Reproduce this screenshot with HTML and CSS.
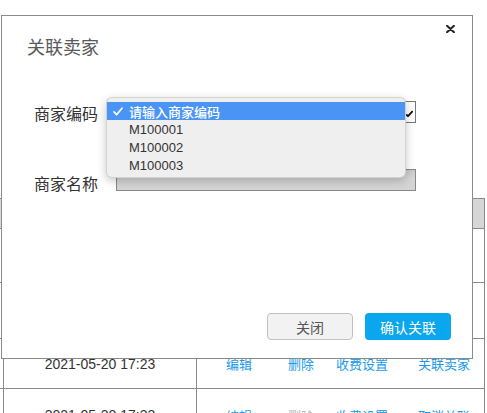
FILE: index.html
```html
<!DOCTYPE html>
<html lang="zh-CN">
<head>
<meta charset="utf-8">
<title>关联卖家</title>
<link rel="stylesheet" href="styles.css">
</head>
<body>
<div class="page">
  <div class="table">
    <div class="row thead">
      <div class="c0"></div><div class="c1"></div><div class="c2"></div>
    </div>
    <div class="row r1">
      <div class="c0"></div><div class="c1"></div><div class="c2"></div>
    </div>
    <div class="row r2">
      <div class="c0"></div><div class="c1"></div><div class="c2"></div>
    </div>
    <div class="row r3">
      <div class="c0"></div>
      <div class="c1 date">2021-05-20 17:23</div>
      <div class="c2 actions">
        <span class="link">编辑</span>
        <span class="link">删除</span>
        <span class="link">收费设置</span>
        <span class="link">关联卖家</span>
      </div>
    </div>
    <div class="row r4">
      <div class="c0"></div>
      <div class="c1 date">2021-05-20 17:23</div>
      <div class="c2 actions">
        <span class="link">编辑</span>
        <span class="link disabled">删除</span>
        <span class="link">收费设置</span>
        <span class="link">取消关联</span>
      </div>
    </div>
  </div>

  <div class="dialog">
    <svg class="close" width="9" height="8" viewBox="0 0 9 8"><path d="M1 0.8 L8 7.2 M8 0.8 L1 7.2" stroke="#222" stroke-width="2" stroke-linecap="round"/></svg>
    <div class="title">关联卖家</div>
    <div class="form">
      <div class="frow first">
        <div class="label">商家编码</div>
        <div class="select-wrap">
          <div class="select">
            <svg class="arrow" width="7" height="7" viewBox="0 0 7 7"><path d="M0.8 5 L2 6.2 L6.2 1.6" stroke="#111" stroke-width="1.8" fill="none" stroke-linecap="round"/></svg>
          </div>
          <div class="popup">
            <div class="opt active"><span class="chk"><svg width="10" height="9" viewBox="0 0 10 9"><path d="M1 4.8 L3.6 7.6 L9 1.2" stroke="#fff" stroke-width="1.7" fill="none" stroke-linecap="round" stroke-linejoin="round"/></svg></span><span class="txt">请输入商家编码</span></div>
            <div class="opt"><span class="chk"></span><span class="txt">M100001</span></div>
            <div class="opt"><span class="chk"></span><span class="txt">M100002</span></div>
            <div class="opt"><span class="chk"></span><span class="txt">M100003</span></div>
          </div>
        </div>
      </div>
      <div class="frow second">
        <div class="label low">商家名称</div>
        <div class="input"></div>
      </div>
    </div>
    <div class="footer">
      <div class="btn plain">关闭</div>
      <div class="btn primary">确认关联</div>
    </div>
  </div>
</div>
</body>
</html>
```

FILE: styles.css
```css
html, body {
  margin: 0;
  padding: 0;
  background: #fff;
}
body {
  width: 487px;
  height: 413px;
  overflow: hidden;
  font-family: "Liberation Sans", "Noto Sans CJK SC", sans-serif;
  color: #333;
}
.page {
  position: relative;
  padding-top: 198px;
}
.table {
  width: 484px;
  border-top: 1px solid #8a8a8a;
  border-right: 1px solid #8a8a8a;
}
.row {
  display: flex;
  border-bottom: 1px solid #8a8a8a;
}
.thead { height: 29px; background: #d6d6d6; }
.r1 { height: 53px; }
.r2 { height: 55px; }
.r3 { height: 49px; }
.r4 { height: 49px; }
.c0 { width: 3px; }
.c1 {
  width: 192px;
  border-left: 1px solid #8a8a8a;
}
.c2 {
  flex: 1;
  border-left: 1px solid #8a8a8a;
}
.thead .c1, .thead .c2 { border-left: none; }
.date {
  display: flex;
  align-items: center;
  justify-content: center;
  font-size: 14px;
  color: #333;
}
.r4 .date { padding-top: 3px; }
.actions {
  display: grid;
  grid-template-columns: 62px 48px 82px auto;
  align-items: center;
  padding-left: 29px;
  font-size: 13px;
  font-family: "Noto Sans CJK SC", sans-serif;
}
.r4 .actions { padding-top: 3px; }
.link { color: #1a9be8; white-space: nowrap; }
.link.disabled { color: #b8b8b8; }

.dialog {
  position: absolute;
  left: 1px;
  top: 15px;
  width: 470px;
  height: 342px;
  border: 1px solid #8a8a8a;
  background: #fff;
  display: flex;
  flex-direction: column;
}
.close {
  position: absolute;
  left: 444px;
  top: 9px;
}
.title {
  padding: 18px 0 0 25px;
  font-size: 18px;
  line-height: 24px;
  color: #5a5a5a;
  font-family: "Noto Sans CJK SC", sans-serif;
}
.form {
  padding-left: 32px;
}
.frow {
  display: flex;
  align-items: flex-start;
  height: 22px;
}
.frow.first { margin-top: 43px; }
.frow.second { margin-top: 46px; }
.label {
  width: 83px;
  font-size: 16px;
  line-height: 22px;
  margin-top: 1px;
  color: #333;
  font-family: "Noto Sans CJK SC", sans-serif;
}
.label.low { margin-top: 3px; width: 82px; }
.select-wrap {
  position: relative;
}
.select {
  width: 297px;
  height: 20px;
  border: 1px solid #777;
  background: #fff;
  position: relative;
}
.arrow {
  position: absolute;
  right: 2px;
  top: 8px;
}
.popup {
  position: absolute;
  left: -11px;
  top: -4px;
  width: 298px;
  padding: 4px 0 3px;
  background: #efefef;
  border: 1px solid rgba(0,0,0,0.12);
  border-radius: 6px;
  box-shadow: 0 3px 10px rgba(0,0,0,0.22);
}
.opt {
  display: flex;
  align-items: center;
  height: 18px;
  padding-left: 6px;
  font-size: 13px;
  color: #333;
}
.opt .txt { font-family: "Liberation Sans", "Noto Sans CJK SC", sans-serif; }
.opt.active {
  background: #4a94f5;
  color: #fff;
}
.opt.active .txt { font-weight: 500; font-family: "Noto Sans CJK SC", sans-serif; }
.chk {
  width: 16px;
  display: flex;
  align-items: center;
}
.input {
  width: 298px;
  height: 20px;
  border: 1px solid #888;
  background: linear-gradient(#c9c9c9, #d6d6d6 40%, #d4d4d4);
}
.footer {
  margin-top: auto;
  display: flex;
  justify-content: flex-end;
  gap: 12px;
  padding: 0 21px 18px 0;
}
.btn {
  width: 86px;
  height: 27px;
  box-sizing: border-box;
  border-radius: 4px;
  display: flex;
  align-items: center;
  justify-content: center;
  font-size: 14px;
  font-family: "Noto Sans CJK SC", sans-serif;
}
.btn.plain {
  background: #f2f2f2;
  border: 1px solid #c2c2c2;
  color: #555;
}
.btn.primary {
  background: #0aa6ee;
  color: #fff;
}
```
